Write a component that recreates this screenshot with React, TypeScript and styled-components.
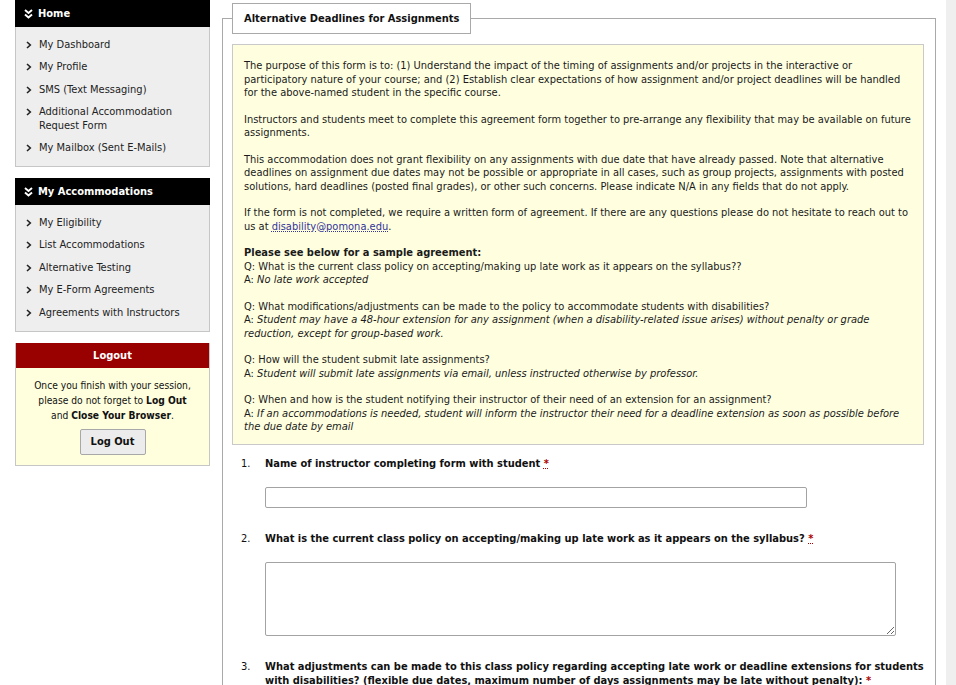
import React from "react";
import styled, { createGlobalStyle } from "styled-components";

const Global = createGlobalStyle`
  html, body { margin: 0; padding: 0; }
  body {
    background: #efefef;
    font-family: "DejaVu Sans Condensed", "DejaVu Sans", sans-serif;
    font-size: 11px;
    color: #111;
  }
`;

const Page = styled.div`
  width: 946px;
  min-height: 685px;
  background: #fff;
  display: flex;
  align-items: flex-start;
  padding-left: 15px;
  box-sizing: border-box;
`;

const Sidebar = styled.aside`
  width: 195px;
  flex: none;
  display: flex;
  flex-direction: column;
`;

const NavBlock = styled.section`
  margin-bottom: 11px;
`;

const NavHeader = styled.div`
  height: 27px;
  background: #000;
  color: #fff;
  font-weight: bold;
  font-size: 11px;
  display: flex;
  align-items: center;
  gap: 5px;
  padding-left: 9px;
`;

const NavList = styled.ul`
  list-style: none;
  margin: 0;
  padding: 6px 0 7px;
  background: #eeeeee;
  border: 1px solid #c6c6c6;
  border-top: none;
`;

const NavItem = styled.li`
  display: flex;
  align-items: flex-start;
  padding: 4.5px 8px 4.5px 10px;
  line-height: 13.5px;
  color: #222;
`;

const ChevronBox = styled.span`
  width: 13px;
  flex: none;
  display: flex;
  padding-top: 3px;
`;

const LogoutBox = styled.section`
  border: 1px solid #c6c6c6;
  border-top: none;
`;

const LogoutHeader = styled.div`
  height: 25px;
  background: #990000;
  color: #fff;
  font-weight: bold;
  font-size: 11px;
  display: flex;
  align-items: center;
  justify-content: center;
`;

const LogoutBody = styled.div`
  background: #ffffdd;
  padding: 10px 8px 10px;
  text-align: center;
  line-height: 15px;
  font-size: 10.2px;
`;

const LogoutButton = styled.button`
  margin-top: 6px;
  width: 66px;
  height: 26px;
  font-family: inherit;
  font-weight: bold;
  font-size: 11px;
  background: #ececec;
  border: 1px solid #a8a8a8;
  border-radius: 2px;
  color: #111;
`;

const Main = styled.main`
  margin-left: 12px;
  width: 714px;
`;

const Fieldset = styled.fieldset`
  margin: 3px 0 0;
  padding: 10px 11px 0 9px;
  border: 1px solid #a9a9a9;
  border-bottom: none;
  min-height: 700px;
`;

const Legend = styled.legend`
  border: 1px solid #a9a9a9;
  background: #fff;
  height: 31px;
  box-sizing: border-box;
  padding: 0 11px;
  font-weight: bold;
  font-size: 11px;
  display: flex;
  align-items: center;
`;

const Notice = styled.div`
  background: #ffffe0;
  border: 1px solid #c9c9c9;
  padding: 14px 11px 10px 11px;
  line-height: 13.5px;
  color: #1a1a1a;
`;

const Para = styled.p`
  margin: 0 0 13px;
  &:last-child { margin-bottom: 0; }
`;

const Mail = styled.a`
  color: #333399;
  text-decoration: underline dotted;
`;

const Answer = styled.em`
  font-style: italic;
`;

const Questions = styled.ol`
  list-style: none;
  margin: 0;
  padding: 12px 0 0 9px;
`;

const Question = styled.li`
  display: grid;
  grid-template-columns: 24px 1fr;
  margin-bottom: 24px;
`;

const Num = styled.span`
  line-height: 14px;
`;

const Label = styled.label`
  font-weight: bold;
  font-size: 11px;
  line-height: 14px;
`;

const Required = styled.abbr`
  color: #aa0000;
  text-decoration: underline dotted;
`;

const Field = styled.div`
  grid-column: 2;
  margin-top: 16px;
`;

const TextInput = styled.input`
  width: 542px;
  height: 21px;
  box-sizing: border-box;
  border: 1px solid #a3a3a3;
  border-radius: 2px;
  display: block;
`;

const TextArea = styled.textarea`
  width: 631px;
  height: 74px;
  box-sizing: border-box;
  border: 1px solid #a3a3a3;
  border-radius: 2px;
  display: block;
  resize: both;
`;

const Chevron = () => (
  <svg width="6" height="8" viewBox="0 0 6 8">
    <path d="M1 1 L4.3 4 L1 7" fill="none" stroke="#222" strokeWidth="1.6" />
  </svg>
);

const DoubleChevron = () => (
  <svg width="9" height="10" viewBox="0 0 9 10">
    <path d="M1 1 L4.5 4 L8 1 M1 5.5 L4.5 8.5 L8 5.5" fill="none" stroke="#fff" strokeWidth="1.9" />
  </svg>
);

const homeLinks = [
  "My Dashboard",
  "My Profile",
  "SMS (Text Messaging)",
  "Additional Accommodation Request Form",
  "My Mailbox (Sent E-Mails)",
];

const accommodationLinks = [
  "My Eligibility",
  "List Accommodations",
  "Alternative Testing",
  "My E-Form Agreements",
  "Agreements with Instructors",
];

const Nav = ({ title, links }: { title: string; links: string[] }) => (
  <NavBlock>
    <NavHeader>
      <DoubleChevron />
      {title}
    </NavHeader>
    <NavList>
      {links.map((l) => (
        <NavItem key={l}>
          <ChevronBox>
            <Chevron />
          </ChevronBox>
          <span>{l === "Additional Accommodation Request Form" ? <>Additional Accommodation<br />Request Form</> : l}</span>
        </NavItem>
      ))}
    </NavList>
  </NavBlock>
);

export default function App() {
  return (
    <>
      <Global />
      <Page>
        <Sidebar>
          <Nav title="Home" links={homeLinks} />
          <Nav title="My Accommodations" links={accommodationLinks} />
          <LogoutBox>
            <LogoutHeader>Logout</LogoutHeader>
            <LogoutBody>
              Once you finish with your session,
              <br />
              please do not forget to <b>Log Out</b>
              <br />
              and <b>Close Your Browser</b>.
              <br />
              <LogoutButton>Log Out</LogoutButton>
            </LogoutBody>
          </LogoutBox>
        </Sidebar>
        <Main>
          <Fieldset>
            <Legend>Alternative Deadlines for Assignments</Legend>
            <Notice>
              <Para>
                The purpose of this form is to: (1) Understand the impact of the timing of assignments and/or projects in the interactive or
                participatory nature of your course; and (2) Establish clear expectations of how assignment and/or project deadlines will be handled
                for the above-named student in the specific course.
              </Para>
              <Para>
                Instructors and students meet to complete this agreement form together to pre-arrange any flexibility that may be available on future
                assignments.
              </Para>
              <Para>
                This accommodation does not grant flexibility on any assignments with due date that have already passed. Note that alternative
                deadlines on assignment due dates may not be possible or appropriate in all cases, such as group projects, assignments with posted
                solutions, hard deadlines (posted final grades), or other such concerns. Please indicate N/A in any fields that do not apply.
              </Para>
              <Para>
                If the form is not completed, we require a written form of agreement. If there are any questions please do not hesitate to reach out to
                us at <Mail href="#">disability@pomona.edu</Mail>.
              </Para>
              <Para>
                <b>Please see below for a sample agreement:</b>
                <br />
                Q: What is the current class policy on accepting/making up late work as it appears on the syllabus??
                <br />
                A: <Answer>No late work accepted</Answer>
              </Para>
              <Para>
                Q: What modifications/adjustments can be made to the policy to accommodate students with disabilities?
                <br />
                A: <Answer>Student may have a 48-hour extension for any assignment (when a disability-related issue arises) without penalty or grade
                reduction, except for group-based work.</Answer>
              </Para>
              <Para>
                Q: How will the student submit late assignments?
                <br />
                A: <Answer>Student will submit late assignments via email, unless instructed otherwise by professor.</Answer>
              </Para>
              <Para>
                Q: When and how is the student notifying their instructor of their need of an extension for an assignment?
                <br />
                A: <Answer>If an accommodations is needed, student will inform the instructor their need for a deadline extension as soon as possible before
                the due date by email</Answer>
              </Para>
            </Notice>
            <Questions>
              <Question>
                <Num>1.</Num>
                <Label>
                  Name of instructor completing form with student <Required title="required">*</Required>
                </Label>
                <Field>
                  <TextInput type="text" />
                </Field>
              </Question>
              <Question>
                <Num>2.</Num>
                <Label>
                  What is the current class policy on accepting/making up late work as it appears on the syllabus? <Required title="required">*</Required>
                </Label>
                <Field>
                  <TextArea />
                </Field>
              </Question>
              <Question>
                <Num>3.</Num>
                <Label>
                  What adjustments can be made to this class policy regarding accepting late work or deadline extensions for students
                  with disabilities? (flexible due dates, maximum number of days assignments may be late without penalty): <Required title="required">*</Required>
                </Label>
              </Question>
            </Questions>
          </Fieldset>
        </Main>
      </Page>
    </>
  );
}
